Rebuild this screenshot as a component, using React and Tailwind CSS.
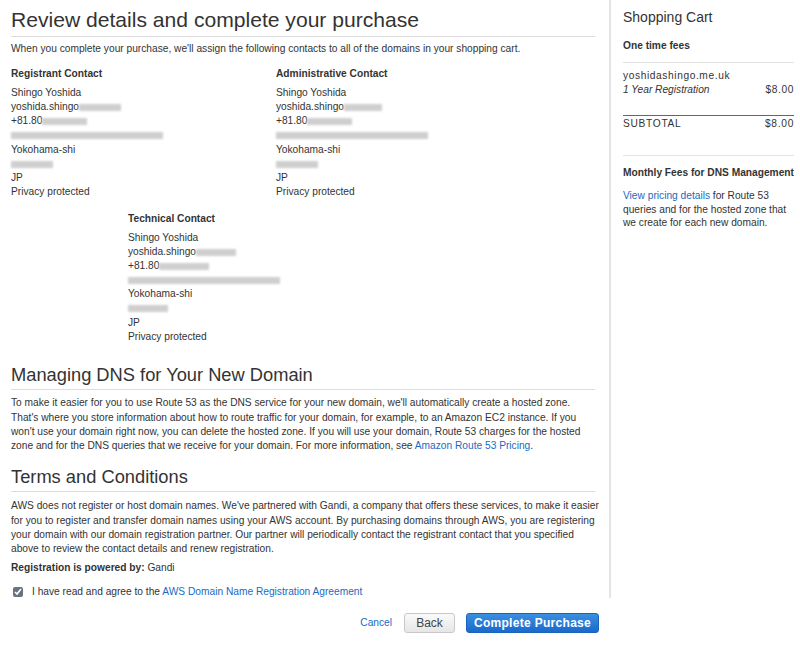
const blur = (w) => (
  <span
    className="inline-block h-[7px] bg-[#cfcfcf] blur-[1.2px] align-middle"
    style={{ width: w }}
  />
);

function Contact({ title, widths, className = "" }) {
  return (
    <div className={className}>
      <div className="font-bold text-[#333] leading-[14px]">{title}</div>
      <div className="mt-[5px] leading-[14.2px]">
        <div>Shingo Yoshida</div>
        <div>yoshida.shingo{blur(widths[0])}</div>
        <div>+81.80{blur(widths[1])}</div>
        <div>{blur(widths[2])}</div>
        <div>Yokohama-shi</div>
        <div>{blur(widths[3])}</div>
        <div>JP</div>
        <div>Privacy protected</div>
      </div>
    </div>
  );
}

export default function App() {
  return (
    <div
      className="flex bg-white text-[10.2px] text-[#333] w-[800px] h-[646px]"
      style={{ fontFamily: '"Liberation Sans", Arial, sans-serif' }}
    >
      {/* Main column */}
      <div className="w-[609px] pl-[11px] pr-[14px]">
        <h1 className="text-[21.1px] leading-[28px] pt-[6px] pb-[2px] text-[#333] border-b border-[#ddd]">
          Review details and complete your purchase
        </h1>
        <p className="mt-[5px] leading-[14px]">
          When you complete your purchase, we'll assign the following contacts to all of the domains in your shopping cart.
        </p>

        <div className="flex mt-[11px]">
          <Contact title="Registrant Contact" widths={[42, 45, 152, 42]} className="w-[265px]" />
          <Contact title="Administrative Contact" widths={[38, 45, 152, 42]} />
        </div>
        <Contact title="Technical Contact" widths={[40, 50, 152, 40]} className="ml-[117px] mt-[12px]" />

        <h2 className="text-[18.3px] leading-[24px] mt-[19px] pb-[2px] border-b border-[#ddd]">
          Managing DNS for Your New Domain
        </h2>
        <p className="mt-[6px] leading-[14.3px]">
          To make it easier for you to use Route 53 as the DNS service for your new domain, we'll automatically create a hosted zone. That's where you store information about how to route traffic for your domain, for example, to an Amazon EC2 instance. If you won't use your domain right now, you can delete the hosted zone. If you will use your domain, Route 53 charges for the hosted zone and for the DNS queries that we receive for your domain. For more information, see{" "}
          <a className="text-[#1a6ac3]">Amazon Route 53 Pricing</a>.
        </p>

        <h2 className="text-[18.3px] leading-[24px] mt-[12px] pb-[2px] border-b border-[#ddd]">
          Terms and Conditions
        </h2>
        <p className="mt-[7px] leading-[14.1px] -mr-[6px]">
          AWS does not register or host domain names. We've partnered with Gandi, a company that offers these services, to make it easier for you to register and transfer domain names using your AWS account. By purchasing domains through AWS, you are registering your domain with our domain registration partner. Our partner will periodically contact the registrant contact that you specified above to review the contact details and renew registration.
        </p>
        <p className="mt-[5px] leading-[14px]">
          <span className="font-bold">Registration is powered by:</span> Gandi
        </p>
        <label className="flex items-center mt-[10px] leading-[14px]">
          <input type="checkbox" defaultChecked className="w-[10px] h-[10px] ml-[2px] mr-[9px] accent-gray-500" />
          <span>
            I have read and agree to the{" "}
            <a className="text-[#1a6ac3]">AWS Domain Name Registration Agreement</a>
          </span>
        </label>

        <div className="flex justify-end items-center mt-[14px] gap-[11px] -mr-[4px]">
          <a className="text-[#1a6ac3] mr-[1px]">Cancel</a>
          <button className="h-[20px] w-[51px] text-[12px] text-[#444] border border-[#c8c8c8] rounded-[3px] bg-gradient-to-b from-[#fafafa] to-[#e6e6e6]">
            Back
          </button>
          <button className="h-[20px] w-[133px] text-[12px] font-bold tracking-[0.3px] text-white rounded-[3px] border border-[#1a64bd] bg-gradient-to-b from-[#3a8fe0] to-[#1a6acb]">
            Complete Purchase
          </button>
        </div>
      </div>

      {/* Sidebar */}
      <div className="w-[191px] self-start h-[598px] border-l-2 border-[#e4e4e4] pl-[12px] pr-[6px]">
        <div className="text-[14px] leading-[18px] pt-[8px]">Shopping Cart</div>
        <div className="font-bold mt-[13px] leading-[14px]">One time fees</div>
        <div className="border-t border-[#e2e2e2] mt-[9px] pt-[6px] tracking-[0.6px] leading-[14px]">
          <div>yoshidashingo.me.uk</div>
          <div className="flex justify-between">
            <span className="italic tracking-normal">1 Year Registration</span>
            <span>$8.00</span>
          </div>
        </div>
        <div className="border-t border-[#666] mt-[18px] pt-[1px] flex justify-between tracking-[0.7px] leading-[14px]">
          <span>SUBTOTAL</span>
          <span>$8.00</span>
        </div>
        <div className="border-t border-[#e2e2e2] mt-[24px] pt-[10px]">
          <div className="font-bold leading-[14px] whitespace-nowrap">Monthly Fees for DNS Management</div>
          <p className="mt-[9px] leading-[13.5px]">
            <a className="text-[#1a6ac3]">View pricing details</a> for Route 53 queries and for the hosted zone that we create for each new domain.
          </p>
        </div>
      </div>
    </div>
  );
}
